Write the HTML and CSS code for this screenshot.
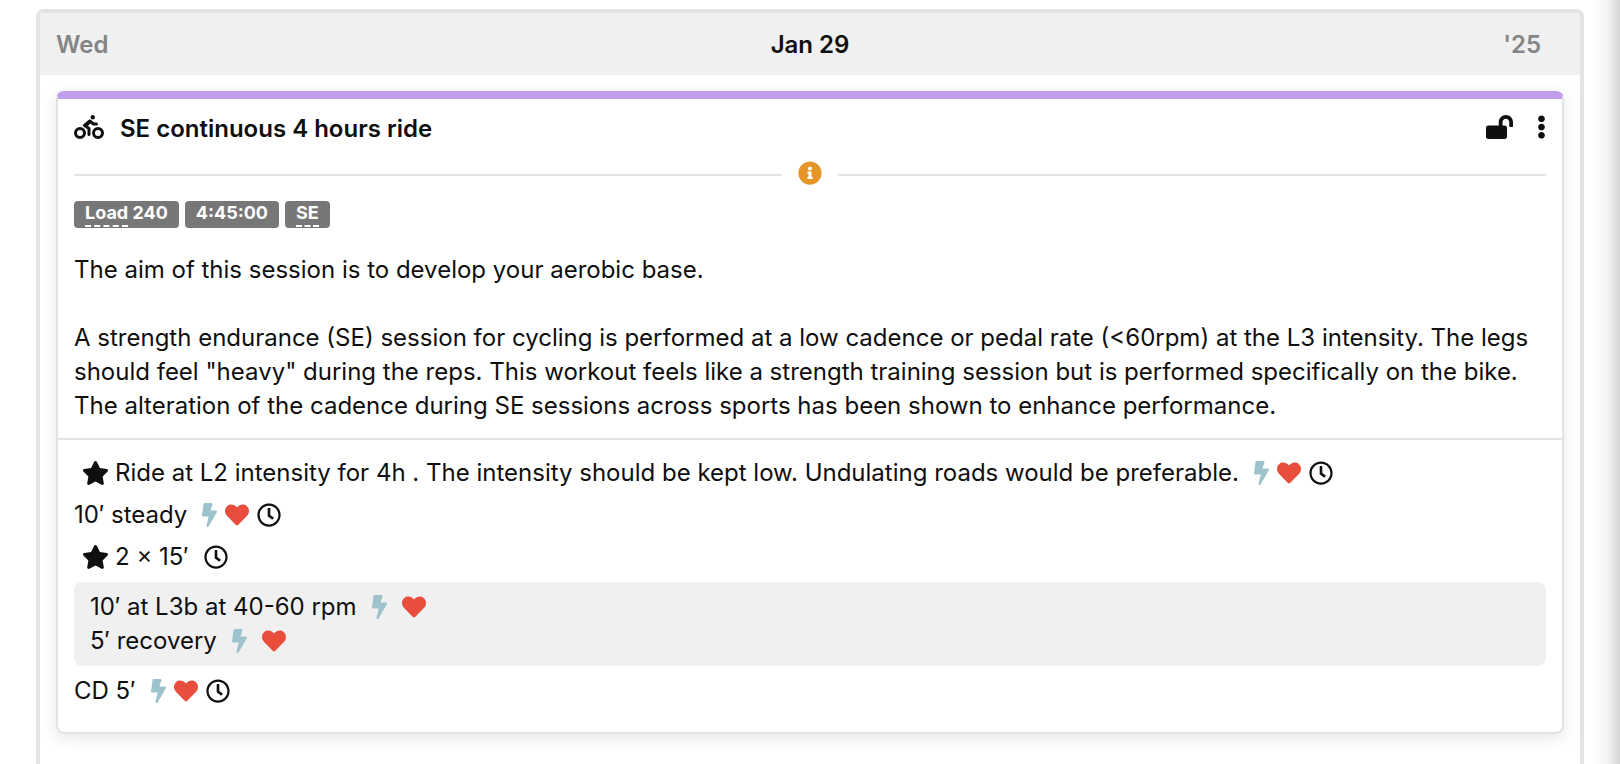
FILE: index.html
```
<!DOCTYPE html>
<html lang="en">
<head>
  <meta charset="UTF-8">
  <meta name="viewport" content="width=device-width, initial-scale=1.0">
  <title>Training plan - Jan 29</title>
  <link rel="stylesheet" href="styles.css">
</head>
<body>
  <!-- Icon shapes -->
  <svg class="sprite" aria-hidden="true">
    <symbol id="bolt" viewBox="0 0 320 512"><path d="M296 160H180.6l42.6-129.8C227.2 15 215.7 0 200 0H56C44 0 33.8 8.9 32.2 20.8l-32 240C-1.7 275.2 9.5 288 24 288h118.7L96.6 482.5c-3.6 15.2 8 29.5 23.3 29.5 8.4 0 16.4-4.4 20.8-12l176-304c9.3-15.9-2.2-36-20.7-36z"/></symbol>
    <symbol id="heart" viewBox="0 0 512 512"><path d="M462.3 62.6C407.5 15.9 326 24.3 275.7 76.2L256 96.5l-19.7-20.3C186.1 24.3 104.5 15.9 49.7 62.6c-62.8 53.6-66.1 149.8-9.9 207.9l193.5 199.8c12.5 12.9 32.8 12.9 45.3 0l193.5-199.8c56.3-58.1 53-154.3-9.8-207.9z"/></symbol>
    <symbol id="clock" viewBox="0 0 512 512"><path d="M256 8C119 8 8 119 8 256s111 248 248 248 248-111 248-248S393 8 256 8zm0 448c-110.5 0-200-89.5-200-200S145.5 56 256 56s200 89.5 200 200-89.5 200-200 200zm61.8-104.4l-84.9-61.7c-3.1-2.3-4.9-5.9-4.9-9.7V116c0-6.6 5.4-12 12-12h32c6.6 0 12 5.4 12 12v141.7l66.8 48.6c5.4 3.9 6.5 11.4 2.6 16.8L334.6 349c-3.9 5.3-11.4 6.5-16.8 2.6z"/></symbol>
    <symbol id="star" viewBox="0 0 576 512"><path d="M259.3 17.8L194 150.2 47.9 171.5c-26.2 3.8-36.7 36.1-17.7 54.6l105.7 103-25 145.5c-4.5 26.3 23.2 46 46.4 33.7L288 439.6l130.7 68.7c23.2 12.2 50.9-7.4 46.4-33.7l-25-145.5 105.7-103c19-18.5 8.5-50.8-17.7-54.6L382 150.2 316.7 17.8c-11.7-23.6-45.6-23.9-57.4 0z"/></symbol>
  </svg>

  <main class="day">
    <header class="day-header">
      <span class="weekday">Wed</span>
      <h1 class="date">Jan 29</h1>
      <span class="year">'25</span>
    </header>

    <article class="workout">
      <div class="workout-top">
        <div class="workout-title">
          <svg class="icon icon-bike" viewBox="0 0 640 512" aria-hidden="true"><path d="M400 96a48 48 0 1 0-48-48 48 48 0 0 0 48 48zm-4 121a31.9 31.9 0 0 0 20 7h64a32 32 0 0 0 0-64h-52.78L356 103a31.94 31.94 0 0 0-40.81.68l-112 96a32 32 0 0 0 3.08 50.92L288 305.12V416a32 32 0 0 0 64 0V288a32 32 0 0 0-14.25-26.62l-41.36-27.57 58.25-49.92zm116 39a128 128 0 1 0 128 128 128 128 0 0 0-128-128zm0 192a64 64 0 1 1 64-64 64 64 0 0 1-64 64zM128 256a128 128 0 1 0 128 128 128 128 0 0 0-128-128zm0 192a64 64 0 1 1 64-64 64 64 0 0 1-64 64z"/></svg>
          <h2>SE continuous 4 hours ride</h2>
          <button class="icon-button" type="button" aria-label="Lock workout">
            <svg class="icon icon-lock" viewBox="0 0 576 512"><path d="M423.5 0C339.5.3 272 69.5 272 153.5V224H48c-26.5 0-48 21.5-48 48v192c0 26.5 21.5 48 48 48h352c26.5 0 48-21.5 48-48V272c0-26.5-21.5-48-48-48h-48v-71.1c0-39.6 31.7-72.5 71.3-72.9 40-.4 72.7 32.1 72.7 72v80c0 13.3 10.7 24 24 24h32c13.3 0 24-10.7 24-24v-80C576 68 507.5-.3 423.5 0z"/></svg>
          </button>
          <button class="icon-button" type="button" aria-label="More options">
            <svg class="icon icon-more" viewBox="0 0 192 512"><path d="M96 184c39.8 0 72 32.2 72 72s-32.2 72-72 72-72-32.2-72-72 32.2-72 72-72zM24 80c0 39.8 32.2 72 72 72s72-32.2 72-72S135.8 8 96 8 24 40.2 24 80zm0 352c0 39.8 32.2 72 72 72s72-32.2 72-72-32.2-72-72-72-72 32.2-72 72z"/></svg>
          </button>
        </div>

        <div class="divider">
          <svg class="icon icon-info" viewBox="0 0 512 512" aria-hidden="true"><path d="M256 8C119.043 8 8 119.083 8 256c0 136.997 111.043 248 248 248s248-111.003 248-248C504 119.083 392.957 8 256 8zm0 110c23.196 0 42 18.804 42 42s-18.804 42-42 42-42-18.804-42-42 18.804-42 42-42zm56 254c0 6.627-5.373 12-12 12h-88c-6.627 0-12-5.373-12-12v-24c0-6.627 5.373-12 12-12h12v-64h-12c-6.627 0-12-5.373-12-12v-24c0-6.627 5.373-12 12-12h64c6.627 0 12 5.373 12 12v100h12c6.627 0 12 5.373 12 12v24z"/></svg>
        </div>

        <div class="tags">
          <span class="tag"><abbr>Load</abbr> 240</span>
          <span class="tag">4:45:00</span>
          <span class="tag"><abbr>SE</abbr></span>
        </div>

        <div class="description">
          <p>The aim of this session is to develop your aerobic base.</p>
          <p>A strength endurance (SE) session for cycling is performed at a low cadence or pedal rate (&lt;60rpm) at the L3 intensity. The legs should feel "heavy" during the reps. This workout feels like a strength training session but is performed specifically on the bike. The alteration of the cadence during SE sessions across sports has been shown to enhance performance.</p>
        </div>
      </div>

      <div class="steps">
        <div class="step key-step">
          <svg class="icon icon-star"><use href="#star"/></svg>
          <span>Ride at L2 intensity for 4h . The intensity should be kept low. Undulating roads would be preferable.</span>
          <span class="targets">
            <svg class="icon icon-bolt"><use href="#bolt"/></svg>
            <svg class="icon icon-heart"><use href="#heart"/></svg>
            <svg class="icon"><use href="#clock"/></svg>
          </span>
        </div>
        <div class="step">
          <span>10′ steady</span>
          <span class="targets">
            <svg class="icon icon-bolt"><use href="#bolt"/></svg>
            <svg class="icon icon-heart"><use href="#heart"/></svg>
            <svg class="icon"><use href="#clock"/></svg>
          </span>
        </div>
        <div class="step key-step">
          <svg class="icon icon-star"><use href="#star"/></svg>
          <span>2 × 15′</span>
          <span class="targets">
            <svg class="icon"><use href="#clock"/></svg>
          </span>
        </div>
        <div class="repeat">
          <div class="step">
            <span>10′ at L3b at 40-60 rpm</span>
            <span class="targets">
              <svg class="icon icon-bolt"><use href="#bolt"/></svg>
              <svg class="icon icon-heart"><use href="#heart"/></svg>
            </span>
          </div>
          <div class="step">
            <span>5′ recovery</span>
            <span class="targets">
              <svg class="icon icon-bolt"><use href="#bolt"/></svg>
              <svg class="icon icon-heart"><use href="#heart"/></svg>
            </span>
          </div>
        </div>
        <div class="step">
          <span>CD 5′</span>
          <span class="targets">
            <svg class="icon icon-bolt"><use href="#bolt"/></svg>
            <svg class="icon icon-heart"><use href="#heart"/></svg>
            <svg class="icon"><use href="#clock"/></svg>
          </span>
        </div>
      </div>
    </article>
  </main>
</body>
</html>
```
FILE: styles.css
```
* {
  margin: 0;
  padding: 0;
  box-sizing: border-box;
}

body {
  display: flex;
  min-height: 100vh;
  padding: 9px 36px 0;
  background: #fff;
  color: #0f0f0f;
  font-family: Inter, "Liberation Sans", sans-serif;
  font-size: 24px;
  line-height: 34px;
}

/* shade cast by the panel on the right */
body::after {
  content: "";
  position: fixed;
  top: 0;
  right: 0;
  bottom: 0;
  width: 28px;
  background: linear-gradient(to right, rgba(0, 0, 0, 0), rgba(0, 0, 0, 0.04) 50%, rgba(0, 0, 0, 0.16));
}

.sprite {
  display: none;
}

.icon {
  display: block;
  flex: none;
  width: 24px;
  height: 24px;
  fill: currentColor;
}

.day {
  flex: 1;
  border: 4px solid #e3e3e3;
  border-bottom: none;
  border-radius: 8px 8px 0 0;
}

.day-header {
  display: grid;
  grid-template-columns: 1fr auto 1fr;
  padding: 15px 16px 13px;
  background: #f0f0f0;
  font-weight: 600;
}

.date {
  font-size: 24px;
  font-weight: 600;
}

.weekday,
.year {
  color: #858585;
}

.year {
  padding-right: 23px;
  text-align: right;
}

.workout {
  margin: 16px;
  border: 2px solid #e3e3e3;
  border-top: 8px solid #c09eee;
  border-radius: 8px;
  box-shadow: 0 4px 16px rgba(0, 0, 0, 0.1);
}

.workout-top {
  padding: 16px 16px 15px;
  border-bottom: 2px solid #e3e3e3;
}

.workout-title {
  display: flex;
  align-items: flex-start;
  gap: 16px;
}

.workout-title h2 {
  flex: 1;
  font-size: 24px;
  font-weight: 600;
  line-height: 28px;
}

.icon-button {
  border: none;
  background: none;
  color: inherit;
  cursor: pointer;
}

.icon-bike {
  width: 30px;
}

.icon-lock {
  width: 27px;
  margin-right: 8px;
}

.icon-more {
  width: 9px;
}

.divider {
  display: flex;
  align-items: center;
  gap: 16px;
  margin-top: 18px;
}

.divider::before,
.divider::after {
  content: "";
  flex: 1;
  height: 2px;
  margin-top: 4px;
  background: #e3e3e3;
}

.icon-info {
  color: #e69528;
}

.tags {
  display: flex;
  gap: 6px;
  margin-top: 16px;
}

.tag {
  height: 27px;
  padding: 0 11px;
  border-radius: 4px;
  background: #777;
  color: #fff;
  font-size: 18px;
  font-weight: 700;
  line-height: 24px;
}

.tag abbr {
  display: inline-block;
  height: 26px;
  border-bottom: 2px dashed #fff;
}

.description {
  margin-top: 25px;
}

.description p + p {
  margin-top: 34px;
}

.steps {
  display: flex;
  flex-direction: column;
  gap: 8px;
  padding: 16px 16px 24px;
}

.step {
  display: flex;
  align-items: center;
}

.key-step {
  padding-left: 8px;
}

.icon-star {
  width: 27px;
  margin-right: 6px;
}

.targets {
  display: flex;
  gap: 8px;
  margin-left: 15px;
}

.icon-bolt {
  width: 15px;
  color: #9dc3cd;
}

.icon-heart {
  color: #e94e3d;
}

.repeat {
  padding: 8px 16px;
  border-radius: 8px;
  background: #f0f0f0;
}

.repeat .targets {
  gap: 15px;
}
```
